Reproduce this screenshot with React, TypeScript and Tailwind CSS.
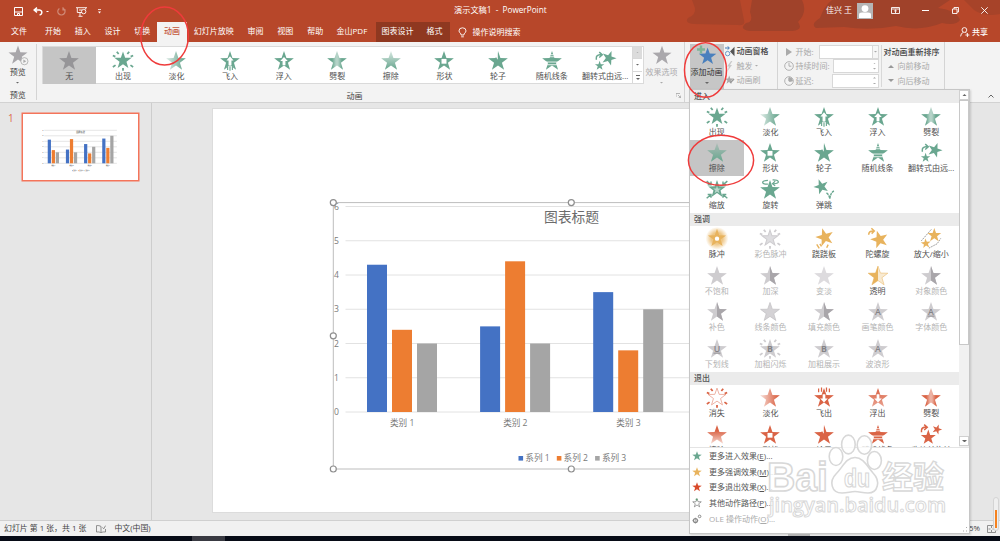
import { useId } from "react";
import type { ReactNode } from "react";

const GREEN = "#6aa790";
const GOLD = "#e8b35d";
const RED = "#da6446";
const GREY = "#cecccf";

type Effect = { name: string; icon: string; off?: boolean };

const entrance: Effect[] = [
  { name: "出现", icon: "appear" },
  { name: "淡化", icon: "fade" },
  { name: "飞入", icon: "fly" },
  { name: "浮入", icon: "float" },
  { name: "劈裂", icon: "split" },
  { name: "擦除", icon: "wipe" },
  { name: "形状", icon: "shape" },
  { name: "轮子", icon: "wheel" },
  { name: "随机线条", icon: "bars" },
  { name: "翻转式由远...", icon: "flip" },
  { name: "缩放", icon: "zoom" },
  { name: "旋转", icon: "swivel" },
  { name: "弹跳", icon: "bounce" },
];

const emphasis: Effect[] = [
  { name: "脉冲", icon: "pulse" },
  { name: "彩色脉冲", icon: "colorPulse", off: true },
  { name: "跷跷板", icon: "teeter" },
  { name: "陀螺旋", icon: "spin" },
  { name: "放大/缩小", icon: "grow" },
  { name: "不饱和", icon: "plain", off: true },
  { name: "加深", icon: "half", off: true },
  { name: "变淡", icon: "light", off: true },
  { name: "透明", icon: "clear" },
  { name: "对象颜色", icon: "half", off: true },
  { name: "补色", icon: "half", off: true },
  { name: "线条颜色", icon: "outline", off: true },
  { name: "填充颜色", icon: "half", off: true },
  { name: "画笔颜色", icon: "letterA", off: true },
  { name: "字体颜色", icon: "letterAU", off: true },
  { name: "下划线", icon: "letterU", off: true },
  { name: "加粗闪烁", icon: "letterBRays", off: true },
  { name: "加粗展示", icon: "letterB", off: true },
  { name: "波浪形", icon: "letterA", off: true },
];

const exit: Effect[] = [
  { name: "消失", icon: "vanish" },
  { name: "淡化", icon: "fade" },
  { name: "飞出", icon: "flyOut" },
  { name: "浮出", icon: "floatOut" },
  { name: "劈裂", icon: "split" },
  { name: "擦除", icon: "wipeOut" },
  { name: "形状", icon: "shape" },
  { name: "轮子", icon: "wheel" },
  { name: "随机线条", icon: "bars" },
  { name: "收缩并旋转", icon: "flipOut" },
];

function star(cx = 0, cy = 0, r = 10, rot = 0) {
  const pts: string[] = [];
  for (let i = 0; i < 10; i++) {
    const a = ((i * 36 - 90 + rot) * Math.PI) / 180;
    const d = i % 2 ? r * 0.4 : r;
    pts.push(`${(cx + d * Math.cos(a)).toFixed(2)},${(cy + d * Math.sin(a)).toFixed(2)}`);
  }
  return pts.join(" ");
}

function Rays({ color }: { color: string }) {
  return (
    <path
      d="M-6-8.4l1.8 2.3M6-8.4l-1.8 2.3M-9.8-4.8l2.4 1.2M9.8-4.8l-2.4 1.2M-9.8 6.4l2.6-1.8M9.8 6.4l-2.6-1.8M0 7.4v2.6"
      stroke={color}
      strokeWidth="1.7"
      fill="none"
    />
  );
}

function StarIcon({ icon, color }: { icon: string; color: string }) {
  const id = useId();
  const base = <polygon points={star(0, 1)} fill={color} />;
  const filled = <polygon points={star(0, 1)} fill={`url(#${id})`} />;
  const letter = (t: string, underline = false) => (
    <>
      {base}
      <text x="0" y="3.4" fontSize="8.5" textAnchor="middle" fill="#858387" fontWeight={t === "B" ? 700 : 600}>
        {t}
      </text>
      {underline && <path d="M-3.4 4.6H3.4" stroke="#858387" strokeWidth=".8" />}
    </>
  );
  let stops: [number, number][] = [];
  let vertical = false;
  let body: ReactNode = base;

  switch (icon) {
    case "appear":
      body = (
        <>
          <polygon points={star(0, 0.2, 8.8)} fill={color} />
          <Rays color={color} />
        </>
      );
      break;
    case "fade":
      stops = [[0.1, 0.3], [0.85, 0.97]];
      body = filled;
      break;
    case "wipe":
      vertical = true;
      stops = [[0.05, 0.3], [0.95, 1]];
      body = filled;
      break;
    case "wipeOut":
      vertical = true;
      stops = [[0.3, 1], [1, 0.25]];
      body = filled;
      break;
    case "split":
      stops = [[0.25, 1], [0.45, 0.5], [0.55, 0.5], [0.75, 1]];
      body = filled;
      break;
    case "fly":
      body = (
        <>
          {base}
          <path d="M0-4L3.4 0H1.4V5H-1.4V0H-3.4Z" fill="#fff" />
          <path d="M-3 5.6H3V10H-3Z" fill="#fff" />
          <path d="M0 5.600V10M-2.300 5v4.200M2.300 5v4.200" stroke={color} strokeWidth="1.1" />
        </>
      );
      break;
    case "float":
      body = (
        <>
          {base}
          <path d="M0-3.2L3.6.6H1.4V4.6H-1.4V.6H-3.6Z" fill="#fff" />
        </>
      );
      break;
    case "flyOut":
      body = (
        <>
          {base}
          <path d="M-1.3-3V1h-2.4L0 5 3.7 1H1.3v-4Z" fill="#fff" />
          <path d="M-2.400-9.500v4M2.400-9.500v4M-5.200-8.500v3.500M5.200-8.500v3.500" stroke={color} strokeWidth="1.2" />
        </>
      );
      break;
    case "floatOut":
      vertical = true;
      stops = [[0, 1], [1, 0.6]];
      body = (
        <>
          {filled}
          <path d="M-1.3-3V1h-2.4L0 5 3.7 1H1.3v-4Z" fill="#fff" />
        </>
      );
      break;
    case "shape":
      body = (
        <>
          {base}
          <rect x="-2.4" y="-1.4" width="4.8" height="4.6" fill="#fff" />
        </>
      );
      break;
    case "wheel":
      body = (
        <>
          {base}
          <path d="M-.2-10V-.6L-2.8-4.4Z" fill="#fff" />
        </>
      );
      break;
    case "bars":
      body = (
        <>
          {base}
          <path d="M-4-5.500H4M-4-3.500H4M-6 1.600H6M-6 4.200H6" stroke="#fff" strokeWidth=".8" />
        </>
      );
      break;
    case "flip":
      body = (
        <>
          <polygon points={star(3.8, -2.2, 7.4, 20)} fill={color} />
          <polygon points={star(-5.2, 5.2, 4.8)} fill={color} />
          <path d="M-8.4-.5V-2.4Q-8.4-5-5-5.4H-3M-5.6-8l3 2.6-3 2.6" stroke={color} strokeWidth="1.4" fill="none" />
        </>
      );
      break;
    case "flipOut":
      body = (
        <>
          <polygon points={star(-2.6, 3, 7.6)} fill={color} />
          <polygon points={star(5.8, -4.8, 5, 20)} fill={color} />
          <path d="M-9.2-2V-4Q-9-6.6-6-6.8H-4M-6.6-9.4l3 2.6-3 2.6" stroke={color} strokeWidth="1.4" fill="none" />
        </>
      );
      break;
    case "zoom":
      body = (
        <>
          <polygon points={star(0, 0, 9)} fill={color} />
          <polygon points={star(0, 0.4, 4)} fill="#b9d8cc" />
          <path
            d="M-10-8l4 3.4M-5.8-7.6v3.2H-9M10-8L6-4.6M5.8-7.6v3.2H9M-10 8.6l4-3.4M-5.8 8.2V5H-9M10 8.6L6 5.2M5.8 8.2V5H9"
            stroke={color}
            strokeWidth="1.4"
            fill="none"
          />
        </>
      );
      break;
    case "swivel":
      body = (
        <>
          {base}
          <path d="M-2-8.8C-9-8.600-8.600-4.800-2-5M2.500-9.200C9-9.400 10.400-5.600 3.600-5.400" stroke="#fff" strokeWidth="2.4" fill="none" />
          <path d="M-2-8.8C-9-8.600-8.600-4.800-2-5M2.500-9.200C9-9.400 10.400-5.600 3.600-5.400M5-8L2.400-5.500 5-3.400" stroke={color} strokeWidth="1.2" fill="none" />
        </>
      );
      break;
    case "bounce":
      body = (
        <>
          <polygon points={star(-2.6, -2.6, 7.6, -20)} fill={color} />
          <path d="M2.4 3.4Q5 5 5.6 9Q6.4 3 9.6 1.6" stroke={color} strokeWidth="1.4" strokeDasharray="2.6 .6" fill="none" />
        </>
      );
      break;
    case "pulse":
      body = (
        <>
          <radialGradient id={`${id}g`}>
            <stop offset=".5" stopColor={color} stopOpacity=".75" />
            <stop offset="1" stopColor={color} stopOpacity="0" />
          </radialGradient>
          <circle r="11" fill={`url(#${id}g)`} />
          <polygon points={star(0, 0, 9.2)} fill={color} />
          <circle r="2.1" cy=".3" fill="#fff" />
        </>
      );
      break;
    case "colorPulse":
      body = (
        <>
          <polygon points={star(0, 0, 8)} fill="#dedde0" stroke={color} />
          <Rays color={color} />
        </>
      );
      break;
    case "teeter":
      body = (
        <>
          <polygon points={star(0.8, -1, 9.2, -16)} fill={color} />
          <path d="M-7 5.8l2.4 3.8M-4 5.2l1.6 2.6M4 6l-1.4 3" stroke={color} strokeWidth="1.4" />
        </>
      );
      break;
    case "spin":
      body = (
        <>
          <polygon points={star(1.4, 1.2, 9, -16)} fill={color} />
          <path d="M-9-3.4Q-9-7.4-4.6-7.2M-6.4-9.8l2.8 2.6-2.6 2.6" stroke={color} strokeWidth="1.5" fill="none" />
        </>
      );
      break;
    case "grow":
      body = (
        <>
          <path d="M-9.400 2.400L.6-9M-2 9.400L6 5.200 9.400 0" stroke="#888" strokeWidth=".8" strokeDasharray="1.6 .8" fill="none" />
          <polygon points={star(3.2, -3, 7)} fill={color} />
          <polygon points={star(-5, 5, 5, -6)} fill={color} />
        </>
      );
      break;
    case "half":
      body = (
        <>
          {base}
          <path d="M0-9l2.4 6.7 7.1.2-5.7 4.3 2 6.9L0 5Z" fill="#a9a6aa" />
        </>
      );
      break;
    case "clear":
      body = (
        <>
          <polygon points={star(0, 1)} fill="#f8ead2" stroke={color} strokeWidth=".5" />
          <path d="M0-9l-2.4 6.7-7.1.2 5.7 4.3-2 6.9L0 5Z" fill={color} />
        </>
      );
      break;
    case "light":
      body = <polygon points={star(0, 1)} fill="#dddbde" />;
      break;
    case "outline":
      body = <polygon points={star(0, 1, 9.6)} fill="#d4d2d5" stroke="#c2c0c4" strokeWidth=".7" />;
      break;
    case "vanish":
      body = (
        <>
          <polygon points={star(0, 0, 9)} fill="#fff" stroke="#eaa392" strokeWidth=".8" />
          <Rays color={color} />
        </>
      );
      break;
    case "letterA":
      body = letter("A");
      break;
    case "letterAU":
      body = letter("A", true);
      break;
    case "letterU":
      body = letter("U", true);
      break;
    case "letterB":
      body = letter("B");
      break;
    case "letterBRays":
      body = (
        <>
          {letter("B")}
          <Rays color={color} />
        </>
      );
      break;
  }

  return (
    <svg width="24" height="24" viewBox="-11.6 -11 23.2 23.2" className="shrink-0">
      {stops.length > 0 && (
        <linearGradient id={id} x1="0" y1="0" x2={vertical ? 0 : 1} y2={vertical ? 1 : 0}>
          {stops.map(([offset, opacity]) => (
            <stop key={offset} offset={offset} stopColor={color} stopOpacity={opacity} />
          ))}
        </linearGradient>
      )}
      {body}
    </svg>
  );
}

function EffectCell({ effect, color, selected }: { effect: Effect; color: string; selected?: boolean }) {
  return (
    <div className={`flex h-[36.5px] w-[53.6px] flex-col items-center pt-[1.5px] ${selected ? "bg-[#c5c5c5]" : ""}`}>
      <StarIcon icon={effect.icon} color={effect.off ? GREY : color} />
      <span className={`-mt-[2px] whitespace-nowrap leading-[10px] ${effect.off ? "text-[#b4b4b4]" : "text-[#505050]"}`}>{effect.name}</span>
    </div>
  );
}

function EffectSection({ title, effects, color, selected }: { title: string; effects: Effect[]; color: string; selected?: string }) {
  return (
    <section>
      <h3 className="h-[13px] bg-[#ebebeb] pl-1 leading-[12px] font-medium text-[#555]">{title}</h3>
      <div className="flex flex-wrap">
        {effects.map((e) => (
          <EffectCell key={e.name} effect={e} color={color} selected={e.name === selected} />
        ))}
      </div>
    </section>
  );
}

function Tri({ up, color = "#666", size = 4 }: { up?: boolean; color?: string; size?: number }) {
  return (
    <svg width={size} height={size / 2} viewBox="0 0 4 2" className="shrink-0">
      <path d={up ? "M0 2L2 0l2 2Z" : "M0 0h4L2 2Z"} fill={color} />
    </svg>
  );
}

const chartData = [
  { label: "类别 1", values: [4.3, 2.4, 2] },
  { label: "类别 2", values: [2.5, 4.4, 2] },
  { label: "类别 3", values: [3.5, 1.8, 3] },
  { label: "类别 4", values: [4.5, 2.8, 5] },
];
const seriesColors = ["#4472c4", "#ed7d31", "#a5a5a5"];

// drawn in slide units, so the thumbnail can reuse it
function SlideChart({ selected }: { selected?: boolean }) {
  const y = (v: number) => 303 - v * 34.25;
  return (
    <svg viewBox="0 0 716 403" className="h-full w-full" fontSize="8.6" fontWeight={selected ? 400 : 700} fill={selected ? "#7a7a7a" : "#555"}>
      {selected && <rect x="120.3" y="93.6" width="476" height="266.4" fill="none" stroke="#bdbdbd" />}
      {[0, 1, 2, 3, 4, 5, 6].map((v) => (
        <g key={v}>
          <path d={`M132.5 ${y(v)}H584.5`} stroke={selected ? "#e2e2e2" : "#c8c8c8"} strokeWidth={selected ? 1 : 3} />
          <text x="123.5" y={y(v) + 3.2} textAnchor="middle">{v}</text>
        </g>
      ))}
      {chartData.map((c, i) => (
        <g key={c.label}>
          {c.values.map((v, j) => (
            <rect key={j} x={154 + i * 113.1 + j * 25} y={y(v)} width="20" height={v * 34.25} fill={seriesColors[j]} />
          ))}
          <text x={189.2 + i * 113.1} y="317" textAnchor="middle">{c.label}</text>
        </g>
      ))}
      <text x="358.5" y="113" textAnchor="middle" fontSize="13.8" fill="#6b6b6b">图表标题</text>
      {seriesColors.map((c, i) => (
        <g key={c}>
          <rect x={305.5 + i * 38.3} y="347" width="4.6" height="4.6" fill={c} />
          <text x={312.3 + i * 38.3} y="352.4">系列 {i + 1}</text>
        </g>
      ))}
      {selected &&
        [[120.3, 93.6], [358.3, 93.6], [120.3, 226.8], [120.3, 360], [358.3, 360]].map(([cx, cy]) => (
          <circle key={`${cx}-${cy}`} cx={cx} cy={cy} r="3" fill="#fff" stroke="#8e8e8e" strokeWidth="1.2" />
        ))}
    </svg>
  );
}

function TitleBar() {
  return (
    <div className="flex h-[22px] items-center pt-px text-white">
      <div className="flex w-[454px] items-center pl-[14px]">
        <svg width="9" height="9" viewBox="0 0 9 9" fill="none" stroke="#fff">
          <path d="M.5.5h8v8h-8ZM1 5h7M3.5 8V6.5h2V8" />
        </svg>
        <svg width="10" height="9" viewBox="0 0 10 9" fill="none" stroke="#fff" strokeWidth="1.5" className="ml-[10px]">
          <path d="M4 .7L1.2 3 4 5.4M1.5 3H6.5Q9.2 3.4 8.8 6 8.6 7.6 6.6 8" />
        </svg>
        <span className="ml-[3px]"><Tri color="#fff" size={3} /></span>
        <svg width="9" height="9" viewBox="0 0 9 9" fill="none" stroke="#d08a77" strokeWidth="1.2" className="ml-[8px]">
          <path d="M2.4 1.4a3.6 3.6 0 1 0 4 0M6 .2v2.6h2.6" />
        </svg>
        <svg width="11" height="10" viewBox="0 0 11 10" fill="none" stroke="#fff" strokeWidth=".9" className="ml-[10px]">
          <path d="M0 .7h11M1.3 1v4.5H6M9.7 1v1.5M4 5.5V9M2.5 9.3h4M3 3h3" />
          <circle cx="7.7" cy="4.6" r="2.2" />
        </svg>
        <svg width="3" height="5" viewBox="0 0 3 5" fill="#fff" className="ml-[11px]">
          <path d="M0 0h3v.8H0ZM0 2.6h3L1.5 4.4Z" />
        </svg>
      </div>
      <span className="w-[372px] pb-[3px] text-[8.2px]">演示文稿1&nbsp; -&nbsp; PowerPoint</span>
      <span className="w-[31px] pb-[3px]">佳兴 王</span>
      <svg width="16" height="16" viewBox="0 0 16 16" className="mb-[2px]">
        <path d="M0 0h16v16H0Z" fill="#b5b5b5" />
        <circle cx="8" cy="5.6" r="3.4" fill="#fff" />
        <path d="M2 15v-3q0-2.4 3-2.4h6q3 0 3 2.4v3Z" fill="#fff" />
      </svg>
      <svg width="9" height="7" viewBox="0 0 9 7" fill="none" stroke="#fff" strokeWidth=".9" className="mb-[3px] ml-[18px]">
        <path d="M.5.5h8v6h-8ZM.5 2h8M4.5 6V3M3.2 4.2L4.5 3l1.3 1.2" />
      </svg>
      <svg width="7" height="1" viewBox="0 0 7 1" className="mb-[3px] ml-[22px]"><path d="M0 0h7v1H0Z" fill="#fff" /></svg>
      <svg width="7" height="7" viewBox="0 0 7 7" fill="none" stroke="#fff" strokeWidth=".9" className="mb-[3px] ml-[23px]">
        <path d="M.5 2h4.5v4.5H.5ZM2 2V.5h4.5V5H5" />
      </svg>
      <svg width="7" height="7" viewBox="0 0 7 7" stroke="#fff" strokeWidth=".9" className="mb-[3px] ml-[22px]">
        <path d="M.3.3l6.4 6.4M6.7.3L.3 6.7" />
      </svg>
    </div>
  );
}

function Tabs() {
  return (
    <div className="flex h-5 items-stretch leading-[18px] text-white">
      <span className="w-[38px] pl-[11px]">文件</span>
      {["开始", "插入", "设计", "切换", "动画", "幻灯片放映", "审阅", "视图", "帮助"].map((t) => (
        <span key={t} className={`px-[6.9px] ${t === "动画" ? "bg-[#f3f3f3] font-medium text-[#c4573b]" : ""}`}>{t}</span>
      ))}
      <span className="w-[45.5px] pl-[6.5px]">金山PDF</span>
      <div className="flex w-[74px] gap-[13px] bg-[#8f3820] pl-[6px]">
        <span>图表设计</span>
        <span>格式</span>
      </div>
      <svg width="9" height="11" viewBox="0 0 9 11" fill="none" stroke="#fff" strokeWidth=".9" className="mt-[5px] ml-[8px]">
        <path d="M3 8V6.8Q1 5.5 1 3.9 1 .8 4.5.8 8 .8 8 3.9 8 5.5 6 6.8V8ZM3.2 9.8h2.6" />
      </svg>
      <span className="ml-[6px] leading-[19px]">操作说明搜索</span>
      <svg width="10" height="10" viewBox="0 0 10 10" fill="none" stroke="#fff" strokeWidth=".9" className="mt-[5px] ml-auto">
        <circle cx="4.4" cy="3" r="2.4" />
        <path d="M.6 9.4Q.8 6 3.4 5.4M5.4 5.4l1 .6M5.4 8h4M7.4 6v4" />
      </svg>
      <span className="mr-[12px] ml-[2px] leading-[19px] font-medium">共享</span>
    </div>
  );
}

function TimingRow({ icon, label, width, dropdown }: { icon: ReactNode; label: string; width: string; dropdown?: boolean }) {
  return (
    <div className="flex h-[14.6px] items-center text-[#a8a8a8]">
      <span className="flex w-[12px] justify-center">{icon}</span>
      <span className="ml-[1px]">{label}</span>
      <div className={`ml-auto flex h-[14px] items-center justify-end border border-[#d8d8d8] bg-white ${width}`}>
        {dropdown ? (
          <span className="flex h-full w-[6px] items-center justify-center border-l border-[#d8d8d8] bg-[#f6f6f6]"><Tri color="#aaa" size={3} /></span>
        ) : (
          <span className="flex w-[6px] flex-col items-center gap-[4px]"><Tri up color="#aaa" size={3} /><Tri color="#aaa" size={3} /></span>
        )}
      </div>
    </div>
  );
}

function Clock({ filled }: { filled?: boolean }) {
  return (
    <svg width="10" height="10" viewBox="0 0 10 10" fill="none" stroke="#aaa" strokeWidth=".9">
      <circle cx="5" cy="5" r="4.3" />
      <path d="M5 2v3.2h2.4" />
      {filled && <path d="M5 1.6A3.4 3.4 0 0 1 8.4 5H5Z" fill="#aaa" />}
    </svg>
  );
}

function Ribbon() {
  return (
    <div className="flex h-[61px] border-b border-[#d2d2d2] bg-[#f3f3f3] text-[#444]">
      <div className="my-[2px] flex w-[36.5px] flex-col items-center border-r border-[#d4d4d4]">
        <svg width="24" height="22" viewBox="-12 -11 24 22">
          <polygon points={star(0, 0.6)} fill="#a8a6aa" />
          <circle cx="6.4" cy="6.2" r="3.6" fill="#f3f3f3" stroke="#aaa" strokeWidth=".8" />
          <path d="M5.4 4.4v3.6l2.8-1.8Z" fill="#aaa" />
        </svg>
        <span className="leading-[12px]">预览</span>
        <span className="mt-[4px]"><Tri size={3} /></span>
        <span className="mt-auto leading-[10px]">预览</span>
      </div>
      <div className="flex w-[647px] flex-col items-center pt-1">
        <div className="flex w-full">
          <div className="ml-[5px] flex h-[38px] w-[602px] border border-[#dadada] bg-white">
            <EffectCell effect={{ name: "无", icon: "plain" }} color="#969598" selected />
            {entrance.slice(0, 10).map((e) => (
              <EffectCell key={e.name} effect={e} color={GREEN} />
            ))}
            <div className="flex w-[10px] flex-col border-l border-[#d8d8d8] *:flex *:flex-1 *:items-center *:justify-center">
              <span className="bg-[#dcdcdc]"><Tri up color="#aaa" size={3} /></span>
              <span className="border-y border-[#d8d8d8]"><Tri size={3} /></span>
              <span className="flex-col gap-[1.5px]"><i className="h-px w-[4px] bg-[#666]" /><Tri size={4} /></span>
            </div>
          </div>
          <div className="-mt-[2px] flex w-[36px] flex-col items-center text-[#adabad]">
            <svg width="24" height="22" viewBox="-12 -11 24 22"><polygon points={star(0, 0.8)} fill="#aaa8ac" /></svg>
            <span className="leading-[12px] whitespace-nowrap">效果选项</span>
            <span className="mt-[4px]"><Tri color="#aaa" size={3} /></span>
          </div>
        </div>
        <div className="mt-auto mb-[1px] flex w-full items-center leading-[11px]">
          <span className="ml-[310px]">动画</span>
          <svg width="5" height="5" viewBox="0 0 5 5" fill="none" stroke="#999" strokeWidth=".7" className="mr-[3px] ml-auto">
            <path d="M0 4V.5h4M2 2l2.5 2.5M4.6 2.6v2h-2" />
          </svg>
        </div>
      </div>
      <div className="flex w-[94px] border-x border-[#d4d4d4]">
        <div className="mt-[2px] ml-[5px] flex h-[46px] w-[34px] flex-col items-center bg-[#c6c6c6]">
          <svg width="26" height="22" viewBox="-13 -11 26 22">
            <polygon points={star(0.6, 1.6, 9.2)} fill="#4a80bd" />
            <path d="M-6-9.5v8M-10-5.5h8" stroke="#7fb598" strokeWidth="2.4" />
          </svg>
          <span className="leading-[12px] whitespace-nowrap text-[#333]">添加动画</span>
          <span className="mt-[4px]"><Tri size={4} /></span>
        </div>
        <div className="mt-[2px] ml-[1px] flex flex-col *:flex *:h-[14.6px] *:items-center *:gap-[2px]">
          <div className="font-medium">
            <svg width="10" height="11" viewBox="0 0 10 11" fill="none">
              <path d="M0 2h4M2.6.4L4.4 2 2.6 3.6" stroke="#3f78b8" />
              <circle cx="2.6" cy="7.6" r="2.2" stroke="#5c90c4" strokeWidth=".9" />
              <path d="M9.5.8v9.4L5 5.5Z" fill="#555" />
            </svg>
            动画窗格
          </div>
          <div className="text-[#aaa]">
            <svg width="10" height="10" viewBox="0 0 10 10"><path d="M6 0L2 5.500h2L2.600 10 7 4H5L7.400 0Z" fill="#c9c9c9" /></svg>
            触发
            <Tri color="#aaa" size={3} />
          </div>
          <div className="text-[#aaa]">
            <svg width="10" height="10" viewBox="0 0 10 10"><polygon points={star(4.2, 5, 4.6)} fill="#aaa" /><path d="M5 8l4-4" stroke="#999" strokeWidth="1.4" /></svg>
            动画刷
          </div>
        </div>
      </div>
      <div className="flex w-[167px] border-r border-[#d4d4d4] pt-[2.500px]">
        <div className="ml-[5px] w-[96px]">
          <TimingRow label="开始:" width="w-[60px]" dropdown icon={<svg width="6" height="8" viewBox="0 0 6 8"><path d="M0 0l6 4-6 4Z" fill="#aaa" /></svg>} />
          <TimingRow label="持续时间:" width="w-[46px]" icon={<Clock />} />
          <TimingRow label="延迟:" width="w-[47px]" icon={<Clock filled />} />
        </div>
        <div className="ml-[2px] h-[42px] border-l border-[#d8d8d8] pl-[2px] *:flex *:h-[14.6px] *:items-center">
          <div className="font-medium">对动画重新排序</div>
          <div className="gap-[4px] pl-[4px] text-[#aaa]"><Tri up color="#999" size={6} />向前移动</div>
          <div className="gap-[4px] pl-[4px] text-[#aaa]"><Tri color="#999" size={6} />向后移动</div>
        </div>
      </div>
      <svg width="6" height="4" viewBox="0 0 6 4" fill="none" stroke="#666" className="mt-auto mr-[6px] mb-[4px] ml-auto">
        <path d="M.5 3.500L3 1l2.500 2.500" />
      </svg>
    </div>
  );
}

const moreItems = [
  { text: "更多进入效果", key: "E", color: GREEN },
  { text: "更多强调效果", key: "M", color: GOLD },
  { text: "更多退出效果", key: "X", color: "#d8492a" },
  { text: "其他动作路径", key: "P", color: "none" },
];

function AnimationMenu() {
  return (
    <div className="absolute top-[89px] left-[689px] flex h-[445px] w-[281px] flex-col border border-[#c6c6c6] bg-white shadow-[1px_1px_2px_rgba(0,0,0,0.15)]">
      <div className="flex h-[358px] border-b border-[#e4e4e4]">
        <div className="h-[357px] w-[269px] overflow-hidden">
          <EffectSection title="进入" effects={entrance} color={GREEN} selected="擦除" />
          <EffectSection title="强调" effects={emphasis} color={GOLD} />
          <EffectSection title="退出" effects={exit} color={RED} />
        </div>
        <div className="flex w-[10px] flex-col bg-[#f1f1f1]">
          <span className="flex h-[10px] items-center justify-center border border-[#d0d0d0] bg-white"><Tri up size={5} /></span>
          <span className="h-[245px] border border-[#c8c8c8] bg-white" />
          <span className="mt-auto mb-[1px] flex h-[10px] items-center justify-center border border-[#d0d0d0] bg-white"><Tri size={5} /></span>
        </div>
      </div>
      {moreItems.map((m) => (
        <div key={m.key} className="flex h-[15.7px] items-center pl-[2px] text-[#555]">
          <svg width="10" height="10" viewBox="-5 -5 10 10">
            <polygon points={star(0, 0.2, m.color === "none" ? 4.5 : 5)} fill={m.color} stroke={m.color === "none" ? "#666" : "none"} strokeWidth=".6" />
            {m.color === "none" && <circle cx="-.4" cy="-3.4" r="1" fill="#5b9e6f" />}
          </svg>
          <span className="ml-[7px]">{m.text}(<u>{m.key}</u>)...</span>
        </div>
      ))}
      <div className="flex h-[15.7px] items-center pl-[2px] text-[#aaa]">
        <svg width="10" height="10" viewBox="0 0 10 10" fill="none" stroke="#888">
          <circle cx="3.4" cy="6.6" r="2" strokeWidth="1.3" />
          <circle cx="7.6" cy="2.4" r="1.3" />
          <path d="M3.4 3.6v6M.4 6.6h1M5.4 6.6h1" strokeWidth=".6" />
        </svg>
        <span className="ml-[7px]">OLE 操作动作(<u>O</u>)...</span>
      </div>
      <svg width="5" height="5" viewBox="0 0 5 5" fill="#aaa" className="mt-auto mr-[2px] mb-[1px] ml-auto">
        <path d="M4 0h1v1H4ZM4 3.500h1v1H4ZM1 3.500h1v1H1Z" />
      </svg>
    </div>
  );
}

function Watermark() {
  return (
    <svg width="184" height="92" viewBox="0 0 184 92" className="absolute top-[430px] left-[765px]" fill="#fff" fillOpacity=".75" stroke="#d8d8d8" strokeWidth="1.6">
      <text x="2" y="61" fontSize="41" fontWeight="700" textLength="61" lengthAdjust="spacingAndGlyphs" fontFamily="'Liberation Sans', sans-serif">Bai</text>
      <ellipse cx="71" cy="26.5" rx="6.8" ry="9" />
      <ellipse cx="83.4" cy="14.5" rx="6.8" ry="9.4" />
      <ellipse cx="99.4" cy="15" rx="7.2" ry="9.2" />
      <ellipse cx="109.4" cy="30.5" rx="7" ry="9" />
      <path d="M90 27.500C98 27.500 102 36 108 43c8 8 5 20-5 20-6 0-8-1.500-13-1.500S83 63 77 63C66 63 64 51 71 44 78 37 81 27.500 90 27.500Z" />
      <text x="79" y="57" fontSize="25" fontWeight="700" textLength="26" lengthAdjust="spacingAndGlyphs" fontFamily="'Liberation Sans', sans-serif" strokeWidth="1.2">du</text>
      <text x="117" y="58" fontSize="31" fontWeight="700" textLength="62" fontFamily="'Noto Sans CJK SC', sans-serif" strokeWidth="1.3">经验</text>
      <text x="4" y="82" fontSize="20" strokeWidth="1" textLength="177" lengthAdjust="spacingAndGlyphs" fontWeight="600">jingyan.baidu.com</text>
    </svg>
  );
}

export default function App() {
  return (
    <div className="relative flex h-[541px] w-[1000px] flex-col overflow-hidden bg-[#e6e6e6] font-['Open_Sans','Noto_Sans_CJK_SC',sans-serif] text-[8px] select-none">
      <header className="relative bg-[#b7472a]">
        {/* theme clouds behind the title bar */}
        <svg width="320" height="42" viewBox="0 0 320 42" className="absolute top-0 right-0" fill="#a0422a">
          <path d="M12 0H60Q62 10 64 20 66 26 58 25L14 24Q4 23 8 18 16 15 15 8Z" opacity=".7" />
          <path d="M72 0H122Q128 12 118 22 124 30 112 31H70Q58 29 66 23 74 22 70 12Z" />
          <path d="M152 0H270L258 8Q276 10 280 20 276 26 262 23 240 32 216 26 190 31 164 27L136 28Q130 24 140 18 144 6 152 0Z" />
          <path d="M284 0H320V14Q304 17 294 10Z" opacity=".7" />
        </svg>
        <div className="relative">
          <TitleBar />
          <Tabs />
        </div>
      </header>
      <Ribbon />
      <main className="flex h-[418px] border-b border-[#d0d0d0]">
        <aside className="flex w-[152px] border-r border-[#cdcdcd] pt-[10px]">
          <span className="w-[22px] pl-[8px] text-[10px] leading-[10px] text-[#dd6a4e]">1</span>
          <div className="h-[68px] w-[117px] border border-[#f4745a] bg-white shadow-[0_0_0_0.5px_#f4745a]">
            <SlideChart />
          </div>
        </aside>
        <div className="pt-[6px] pl-[61px]">
          <div className="h-[403px] w-[716px] bg-white outline outline-[#dcdcdc]">
            <SlideChart selected />
          </div>
        </div>
      </main>
      <footer className="flex h-[15px] items-center bg-[#f1f1f1] text-[7.9px] text-[#444]">
        <span className="ml-[4px]">幻灯片 第 1 张，共 1 张</span>
        <svg width="10" height="8" viewBox="0 0 10 8" fill="none" stroke="#777" strokeWidth=".8" className="ml-[10px]">
          <path d="M5 1.400Q3 .2.500.600V7Q3 6.600 5 7.600 7 6.600 9.500 7V4M5 1.400V7.400M6.500 2.400l1.200 1.400L9.600.6" />
        </svg>
        <span className="ml-[8px]">中文(中国)</span>
        <span className="ml-auto">85%</span>
        <svg width="9" height="8" viewBox="0 0 9 8" fill="none" stroke="#777" strokeWidth=".8" className="mr-[4px] ml-[7px]">
          <path d="M.5.5h8v7h-8ZM4.500 1v2M4.500 5v2M1.500 4h2M5.500 4h2" />
        </svg>
      </footer>
      <div className="flex h-[5px] items-start overflow-hidden bg-[#070b16]">
        <span className="ml-[192px] h-full w-[33px] bg-[#393a42]" />
        <span className="ml-[706px] pt-[2px] leading-[10px] text-[#ccc]">20:45</span>
      </div>

      <AnimationMenu />
      <Watermark />
      <div className="absolute top-[497px] left-[993px] h-[34px] w-[6px] rounded-full border border-[#d4d4d4] bg-[#efefef]" />
      <div className="absolute top-[510px] left-[995px] h-[18px] w-[2px] bg-[#f58220]" />
      <div className="absolute top-[534px] left-[788px] h-[2px] w-[22px] bg-[#b4b4b4]" />

      {/* red pen marks */}
      <svg width="1000" height="541" viewBox="0 0 1000 541" className="pointer-events-none absolute top-0 left-0" fill="none" stroke="#ef3b3b" strokeWidth="1.5">
        <ellipse cx="164.600" cy="36" rx="23.800" ry="29" />
        <ellipse cx="705.500" cy="70" rx="21" ry="27.300" />
        <ellipse cx="721" cy="160.300" rx="32.600" ry="25" />
      </svg>
    </div>
  );
}
